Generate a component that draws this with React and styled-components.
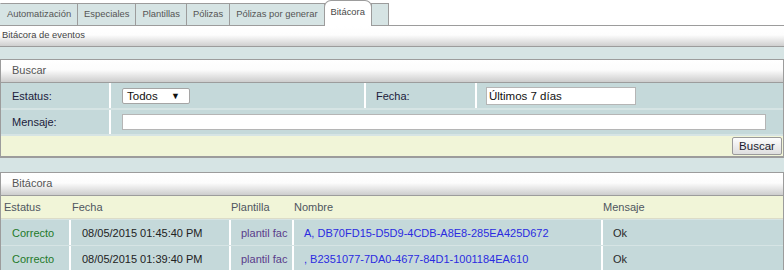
import React from 'react';
import styled, { createGlobalStyle } from 'styled-components';

const colors = {
    page: '#d6e4e4',
    cell: '#c5d9da',
    yellow: '#f1f5d8',
    border: '#9c9c9c',
    muted: '#555',
};

const GlobalStyle = createGlobalStyle`
    html, body {
        margin: 0;
        padding: 0;
        background: ${colors.page};
    }
    body {
        font-family: "Liberation Sans", Arial, sans-serif;
        font-size: 11px;
        color: #222;
    }
    * {
        box-sizing: border-box;
    }
`;

const Wrapper = styled.div`
    min-height: 100vh;
    background: ${colors.page};
`;

const TabBar = styled.div`
    display: flex;
    align-items: flex-end;
    height: 26px;
    background: #fff;
    border-bottom: 1px solid ${colors.border};
`;

const Tab = styled.div`
    height: ${(p) => (p.$active ? '26px' : '22px')};
    margin-bottom: ${(p) => (p.$active ? '-1px' : '0')};
    margin-left: -1px;
    padding: ${(p) => (p.$active ? '4px 6px 0' : '3px 6px 0')};
    min-width: 18px;
    font-size: 9.4px;
    line-height: 14px;
    color: ${(p) => (p.$active ? '#4a4a4a' : colors.muted)};
    background: ${(p) => (p.$active ? '#fff' : colors.page)};
    border: 1px solid ${colors.border};
    border-bottom: ${(p) => (p.$active ? 'none' : '0')};
    border-radius: ${(p) => (p.$active ? '7px 7px 0 0' : '0')};
    white-space: nowrap;

    &:first-child {
        margin-left: 0;
        border-left-color: ${colors.page};
    }
`;

const SubHeader = styled.div`
    height: 21px;
    padding: 3px 2px 0;
    font-size: 9.4px;
    color: #444;
    background: linear-gradient(#fff 0%, #fdfdfd 45%, #cfcfcf 100%);
    border-bottom: 1px solid ${colors.border};
`;

const Content = styled.div`
    padding-top: 12px;
    display: flex;
    flex-direction: column;
    gap: 14px;
`;

const Panel = styled.div`
    border: 1px solid ${colors.border};
    border-bottom: ${(p) => (p.$open ? 'none' : `1px solid ${colors.border}`)};
`;

const PanelHeader = styled.div`
    height: 23px;
    padding: 4px 11px 0;
    color: ${colors.muted};
    background: linear-gradient(#fff 0%, #fcfcfc 45%, #cdcdcd 100%);
    border-bottom: 1px solid ${colors.border};
`;

const FormRow = styled.div`
    display: grid;
    grid-template-columns: ${(p) => p.$cols};
    height: ${(p) => p.$h}px;
    margin-bottom: 2px;
`;

const Cell = styled.div`
    display: flex;
    align-items: center;
    padding-left: ${(p) => p.$pad ?? 10}px;
    background: ${colors.cell};
    border-left: ${(p) => (p.$sep ? '2px solid #fff' : 'none')};
    color: ${(p) => p.$color || '#222'};
    white-space: nowrap;
    overflow: hidden;
`;

const Label = styled(Cell)`
    color: #20203a;
`;

const Select = styled.div`
    display: flex;
    align-items: center;
    justify-content: space-between;
    width: 68px;
    height: 16px;
    padding: 0 9px 0 4px;
    background: #fff;
    border: 1px solid #a5a5a5;
    border-radius: 2px;
    font-size: 11.5px;
    color: #111;

    span {
        font-size: 9px;
    }
`;

const TextInput = styled.input`
    width: ${(p) => p.$w}px;
    height: ${(p) => p.$h}px;
    padding: 0 2px;
    border: 1px solid #b5b5b5;
    background: #fff;
    font-family: inherit;
    font-size: 11.5px;
    color: #111;
    outline: none;
`;

const Footer = styled.div`
    display: flex;
    justify-content: flex-end;
    align-items: flex-start;
    height: 21px;
    padding: 1px 1px 0 0;
    background: ${colors.yellow};
    border-bottom: 1px solid ${colors.border};
`;

const Button = styled.button`
    width: 50px;
    height: 18px;
    padding: 0;
    font-family: inherit;
    font-size: 11.5px;
    color: #1a1a2e;
    background: linear-gradient(#fdfdfd, #dedede);
    border: 1px solid #9a9a9a;
    border-radius: 2px;
`;

const tableCols = '68px 160px 63px 309px 182px';

const HeadRow = styled.div`
    display: grid;
    grid-template-columns: ${tableCols};
    height: 23px;
    background: ${colors.yellow};
    border-bottom: 1px solid #dcdcc8;
    margin-bottom: 1px;
`;

const HeadCell = styled.div`
    display: flex;
    align-items: center;
    padding-left: ${(p) => p.$pad ?? 2}px;
    color: #4f5560;
`;

const DataRow = styled.div`
    display: grid;
    grid-template-columns: ${tableCols};
    height: 25px;
    margin-bottom: 1px;
`;

const fields = [
    { label: 'Estatus', pad: 3 },
    { label: 'Fecha', pad: 3 },
    { label: 'Plantilla', pad: 2 },
    { label: 'Nombre', pad: 2 },
    { label: 'Mensaje', pad: 2 },
];

const rows = [
    {
        estatus: 'Correcto',
        fecha: '08/05/2015 01:45:40 PM',
        plantilla: 'plantil fac',
        nombre: 'A, DB70FD15-D5D9-4CDB-A8E8-285EA425D672',
        mensaje: 'Ok',
    },
    {
        estatus: 'Correcto',
        fecha: '08/05/2015 01:39:40 PM',
        plantilla: 'plantil fac',
        nombre: ', B2351077-7DA0-4677-84D1-1001184EA610',
        mensaje: 'Ok',
    },
];

const tabs = ['Automatización', 'Especiales', 'Plantillas', 'Pólizas', 'Pólizas por generar'];

export default function App() {
    return (
        <Wrapper>
            <GlobalStyle />
            <TabBar>
                {tabs.map((t) => (
                    <Tab key={t}>{t}</Tab>
                ))}
                <Tab $active>Bitácora</Tab>
                <Tab />
            </TabBar>
            <SubHeader>Bitácora de eventos</SubHeader>

            <Content>
                <Panel>
                    <PanelHeader>Buscar</PanelHeader>
                    <FormRow $cols="108px 255px 111px 308px" $h={25}>
                        <Label $pad={11}>Estatus:</Label>
                        <Cell $sep $pad={11}>
                            <Select>
                                Todos <span>▼</span>
                            </Select>
                        </Cell>
                        <Label $sep $pad={10}>Fecha:</Label>
                        <Cell $sep $pad={9}>
                            <TextInput $w={150} $h={18} defaultValue="Últimos 7 días" />
                        </Cell>
                    </FormRow>
                    <FormRow $cols="108px 674px" $h={24}>
                        <Label $pad={11}>Mensaje:</Label>
                        <Cell $sep $pad={11}>
                            <TextInput $w={644} $h={16} />
                        </Cell>
                    </FormRow>
                    <Footer>
                        <Button>Buscar</Button>
                    </Footer>
                </Panel>

                <Panel $open>
                    <PanelHeader>Bitácora</PanelHeader>
                    <HeadRow>
                        {fields.map((f) => (
                            <HeadCell key={f.label} $pad={f.pad}>
                                {f.label}
                            </HeadCell>
                        ))}
                    </HeadRow>
                    {rows.map((r) => (
                        <DataRow key={r.nombre}>
                            <Cell $pad={11} $color="#1f7a2a">{r.estatus}</Cell>
                            <Cell $sep $pad={11}>{r.fecha}</Cell>
                            <Cell $sep $pad={10} $color="#5a3c8a">{r.plantilla}</Cell>
                            <Cell $sep $pad={10} $color="#2b2be0">{r.nombre}</Cell>
                            <Cell $sep $pad={10} $color="#2a2a2a">{r.mensaje}</Cell>
                        </DataRow>
                    ))}
                </Panel>
            </Content>
        </Wrapper>
    );
}
